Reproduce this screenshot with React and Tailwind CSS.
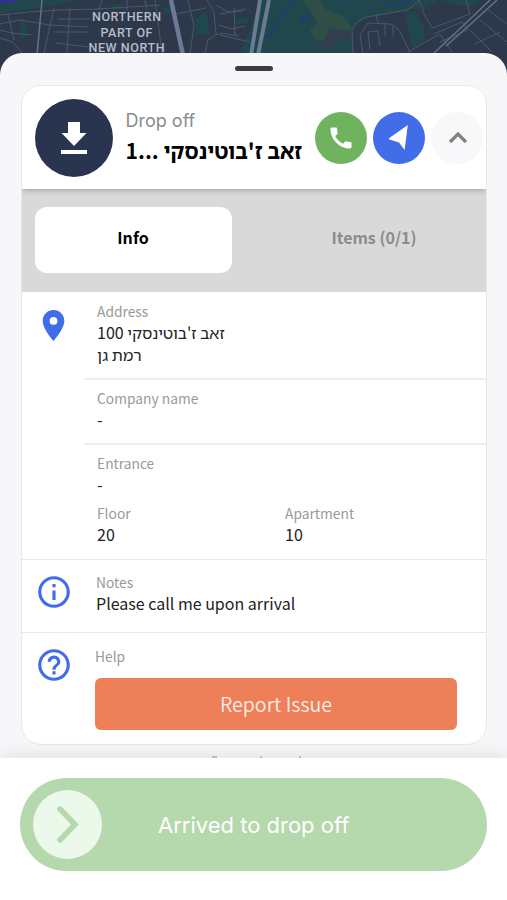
import { MdCall, MdInfoOutline, MdHelpOutline, MdLocationOn } from 'react-icons/md';

function MapBackground() {
    return (
        <svg className="block w-full h-[78px]" viewBox="0 0 507 78" fill="none">
            <rect width="507" height="78" fill="#2d384b" />
            <path d="M270 0H480L472 6L456 5L440 0L425 7L385 14L362 20L352 28L353 53H240L262 0Z" fill="#20474b" />
            <path d="M20 0H78L60 4L32 9L0 13V4ZM195 18L207 12L210 36L196 33ZM20 21H26V36L20 41ZM234 18L248 17V24L234 24ZM408 30L404 10L416 12L424 28V42L412 48ZM112 4H122V9H112ZM162 8H170V14H164Z" fill="#20474b" />
            <path d="M302 0H320L326 10L341 15L350 24L352 34L330 28L326 40L316 41L310 30L318 22L308 8Z" fill="#2f4e45" />
            <path d="M330 28L352 31L353 38L340 39L326 50L320 48L326 36Z" fill="#333f50" />
            <path d="M0 0H20L8 4L0 3Z" fill="#2b3489" />
            <path d="M300 19L307 14L308 19L302 23ZM345 0H349L347 3ZM369 6L372 4V8Z" fill="#253879" />
            <path d="M293 0Q284 12 268 38M381 1Q388 7 400 4L411 0" stroke="#253879" strokeWidth="1.8" />
            <g stroke="#4b576a" strokeWidth="1">
                <path d="M0 15L29 12L60 10L98 9L160 5M54 8L44 53M0 24L20 20L50 25L88 27M0 38L13 42L22 53M8 14L14 40M58 19H90M70 8L67 53M56 43L88 47M54 32H88M102 0L99 10M127 0V10M145 0L147 10M155 0L162 53M0 30L12 33L32 35" />
                <path d="M188 0L194 26L190 53M207 0L214 12L216 34L250 42M217 34L208 40L205 53M176 14L206 8M220 14L246 9M219 25L232 29L245 26M220 33L239 36M234 7L235 35M216 5L228 12L243 11" />
                <path d="M353 53L352 30Q357 20 367 17L407 10L420 0M363 53L360 35L368 23L390 24Q398 26 402 36L410 52M370 50L368 32L378 31L380 46M385 36V24M393 36V26M376 14L378 23M422 10L432 28L470 14L466 0M434 34L462 22L468 30L440 42M408 52L440 34L452 52M470 30L492 52M480 20L507 42M488 10L507 24M475 44L500 32M424 10L418 0" />
            </g>
            <path d="M171 0L183 55" stroke="#6d7a95" strokeWidth="4.5" />
            <path d="M260 0L251 55M269 0L258 55" stroke="#6d7a95" strokeWidth="4" />
            <path d="M42 0L37 55M490 0L467 22L434 53M497 0L473 22L446 46" stroke="#657185" strokeWidth="1.5" />
            <g className="font-['Roboto',sans-serif] font-medium" fill="#b6bdc8" fontSize="12.5" textAnchor="middle">
                <text x="126.5" y="21" textLength="69" lengthAdjust="spacing">NORTHERN</text>
                <text x="126.5" y="36.5" textLength="52" lengthAdjust="spacing">PART OF</text>
                <text x="126.5" y="52" textLength="76" lengthAdjust="spacing">NEW NORTH</text>
            </g>
        </svg>
    );
}

function Field({ label, children, rtl }) {
    return (
        <div>
            <p className="text-[13.8px] leading-[19px] text-[#999]">{label}</p>
            <p dir={rtl ? 'rtl' : 'ltr'} className={`text-[16px] leading-[22px] text-[#222] ${rtl ? 'w-fit text-left' : ''}`}>{children}</p>
        </div>
    );
}

export default function App() {
    return (
        <div className="w-[507px] h-[900px] overflow-hidden flex flex-col bg-white font-['Noto_Sans_CJK_JP','Noto_Sans_Hebrew','Open_Sans',sans-serif]">
            <div className="h-[53px] shrink-0">
                <MapBackground />
            </div>

            <main className="relative h-[705px] shrink-0 overflow-hidden rounded-t-[22px] bg-[#f7f7fa] flex flex-col items-center">
                <div className="mt-[13px] w-[38px] h-[5px] shrink-0 rounded-full bg-[#3d3d3f]" />

                <section className="mt-[14px] ml-px w-[466px] h-[660px] shrink-0 rounded-[20px] border border-[#e8e8ea] bg-white overflow-hidden">
                    <header className="relative h-[103px] pl-[12.5px] pr-[3px] flex items-center bg-white shadow-[0_1px_6px_rgba(0,0,0,0.28)]">
                        <div className="size-[78px] shrink-0 rounded-full bg-[#29344f] flex items-center justify-center">
                            <svg className="w-[26px] h-[32px]" viewBox="0 0 26 32" fill="white">
                                <path d="M7 0H19V11H25.5L13 24L.5 11H7ZM0 28H26V32H0Z" />
                            </svg>
                        </div>
                        <div className="ml-[13px] w-[176px] shrink-0 pb-[2px]">
                            <p className="font-['Inter',sans-serif] text-[18px] leading-[26px] text-[#8b8b8b]">Drop off</p>
                            <p dir="rtl" className="w-fit whitespace-nowrap text-[21.2px] leading-[32px] font-bold text-black">זאב ז'בוטינסקי ...1</p>
                        </div>
                        <div className="ml-auto flex gap-[6px]">
                            <button className="size-[52px] rounded-full bg-[#6fb35f] flex items-center justify-center text-white">
                                <MdCall className="size-[28px]" />
                            </button>
                            <button className="size-[52px] rounded-full bg-[#416ee8] flex items-center justify-center">
                                <svg className="w-[20px] h-[25px]" viewBox="0 0 20 25" fill="white">
                                    <path d="M18.8 0L15.6 25L10 17.5L0 14.3V13.3Z" />
                                </svg>
                            </button>
                            <button className="size-[52px] rounded-full bg-[#f8f8fa] flex items-center justify-center">
                                <svg className="ml-px w-[20px] h-[13px]" viewBox="0 0 20 13" fill="none">
                                    <path d="M2 11L10 3L18 11" stroke="#818181" strokeWidth="3.2" />
                                </svg>
                            </button>
                        </div>
                    </header>

                    <nav className="h-[103px] px-[12.5px] pt-[18px] flex bg-[#d9d9d9]">
                        <button className="w-[197px] h-[66px] rounded-[12px] bg-white text-[16px] font-bold text-black pb-[6px]">Info</button>
                        <button className="w-[197px] h-[66px] ml-[44px] text-[16px] font-bold text-[#8b8b8b] pb-[6px]">Items (0/1)</button>
                    </nav>

                    <div className="flex h-[268px] pt-px border-b border-[#e8e8e8]">
                        <div className="w-[62px] shrink-0 flex justify-center pt-[14px]">
                            <MdLocationOn className="size-[37px] text-[#416ee8]" />
                        </div>
                        <div className="flex-1">
                            <div className="h-[87px] pl-[13px] pt-[9px] border-b-2 border-[#eee]">
                                <Field label="Address" rtl>זאב ז'בוטינסקי 100<br />רמת גן</Field>
                            </div>
                            <div className="h-[65px] pl-[13px] pt-[9px] border-b-2 border-[#eee]">
                                <Field label="Company name">-</Field>
                            </div>
                            <div className="pl-[13px] pt-[9px]">
                                <Field label="Entrance">-</Field>
                                <div className="mt-[9px] flex">
                                    <div className="w-[188px]"><Field label="Floor">20</Field></div>
                                    <Field label="Apartment">10</Field>
                                </div>
                            </div>
                        </div>
                    </div>

                    <div className="h-[73px] pl-[13px] pt-[13px] flex border-b border-[#e8e8e8]">
                        <MdInfoOutline className="size-[38px] shrink-0 text-[#416ee8]" />
                        <div className="ml-[23px]">
                            <Field label="Notes">Please call me upon arrival</Field>
                        </div>
                    </div>

                    <div className="pl-[13px] pt-[13px] flex">
                        <MdHelpOutline className="size-[38px] shrink-0 text-[#416ee8]" />
                        <div className="ml-[22px]">
                            <p className="text-[13.8px] leading-[20px] text-[#999]">Help</p>
                            <button className="mt-[12px] w-[362px] h-[52px] rounded-[6px] bg-[#ed8059] text-[19.6px] leading-[24px] text-[#ffece5] font-[350]">Report Issue</button>
                        </div>
                    </div>
                </section>

                {/* top edge of the line hidden behind the footer */}
                <div className="mt-[11px] w-full h-[2px] shrink-0 pl-[212px] flex items-center text-[#c6c6ca]">
                    <span className="w-[5px] h-[2px] bg-current" />
                    <span className="ml-[43px] w-[2px] h-[2px] bg-current" />
                    <span className="ml-[37px] w-[2px] h-[2px] bg-current" />
                </div>
            </main>

            <footer className="relative h-[142px] px-[20px] pt-[20px] bg-white shadow-[0_-4px_16px_rgba(0,0,0,0.08)]">
                <div className="h-[93px] rounded-full bg-[#b5d8ac] flex items-center pl-[13px]">
                    <div className="size-[69px] rounded-full bg-[#ebf9eb] flex items-center justify-center">
                        <svg className="w-[22px] h-[37px]" viewBox="0 0 22 37" fill="none">
                            <path d="M3 3L18 18.5L3 34" stroke="#b5d8ac" strokeWidth="5.5" strokeLinecap="round" />
                        </svg>
                    </div>
                    <span className="ml-[56px] pt-px font-['Inter',sans-serif] text-[22px] text-white">Arrived to drop off</span>
                </div>
            </footer>
        </div>
    );
}
